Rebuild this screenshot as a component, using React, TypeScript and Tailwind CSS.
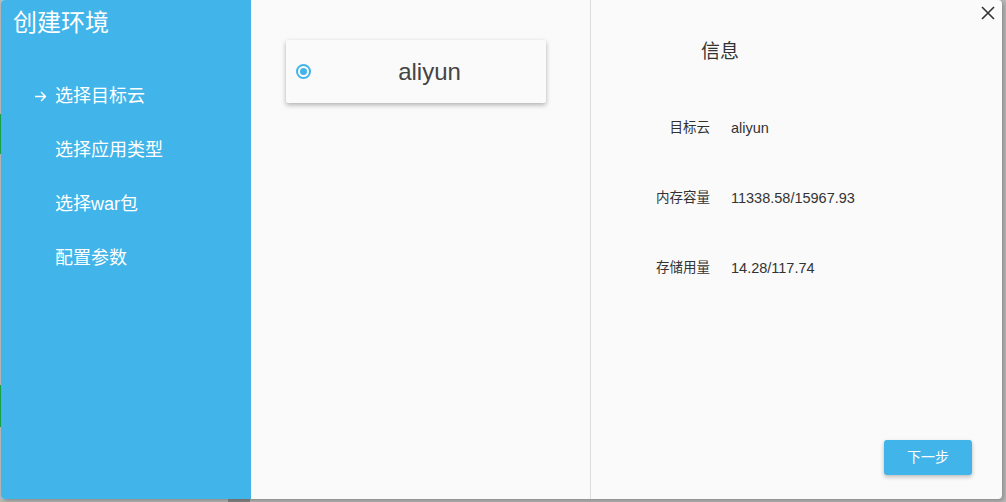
import React from "react";

const font = { fontFamily: '"Liberation Sans", "Noto Sans CJK SC", sans-serif' };

export default function App() {
  const menu = ["选择目标云", "选择应用类型", "选择war包", "配置参数"];
  const info: [string, string][] = [
    ["目标云", "aliyun"],
    ["内存容量", "11338.58/15967.93"],
    ["存储用量", "14.28/117.74"],
  ];
  return (
    <div className="relative w-[1006px] h-[502px] overflow-hidden bg-[#b9b9b9]" style={font}>
      {/* backdrop bits */}
      <div className="absolute left-0 top-[114px] w-[2px] h-[40px] bg-[#1aa64a]" />
      <div className="absolute left-0 top-[385px] w-[2px] h-[42px] bg-[#1aa64a]" />
      <div className="absolute left-[228px] top-[499px] w-[22px] h-[3px] bg-[#8a8a8a]" />

      {/* dialog */}
      <div className="absolute left-[1px] top-0 w-[1001px] h-[499px] flex rounded-[4px] overflow-hidden bg-[#fafafa] shadow-[2px_2px_4px_rgba(0,0,0,0.25)]">
        {/* sidebar */}
        <div className="w-[250px] h-full bg-[#41b4e9] text-white pt-[8px] pl-[12px]">
          <div className="text-[24px] leading-[30px]">创建环境</div>
          <div className="mt-[46px] flex flex-col">
            {menu.map((m, i) => (
              <div key={m} className="h-[54px] flex items-start text-[18px] leading-[24px]">
                <span className="w-[42px] h-[24px] flex items-center justify-end pr-[8px]">
                  {i === 0 && (
                    <svg width="13" height="13" viewBox="0 0 13 13" fill="none" stroke="white" strokeWidth="1.4">
                      <path d="M1 6.5h11M7 2l4.5 4.5L7 11" />
                    </svg>
                  )}
                </span>
                <span>{m}</span>
              </div>
            ))}
          </div>
        </div>

        {/* middle */}
        <div className="w-[339px] h-full pt-[40px] pl-[35px]">
          <div className="w-[260px] h-[63px] bg-[#fafafa] rounded-[2px] shadow-[0_2px_5px_rgba(0,0,0,0.3)] flex items-center pl-[10px]">
            <div className="w-[15px] h-[15px] rounded-full border-[2px] border-[#41b4e9] flex items-center justify-center">
              <div className="w-[7px] h-[7px] rounded-full bg-[#41b4e9]" />
            </div>
            <div className="flex-1 text-center text-[24px] text-[#444] pl-[2px]">aliyun</div>
          </div>
        </div>

        {/* right */}
        <div className="relative flex-1 h-full border-l border-[#dddddd] flex flex-col">
          <button className="absolute right-[7px] top-[6px] w-[14px] h-[14px]">
            <svg width="14" height="14" viewBox="0 0 14 14" stroke="#333" strokeWidth="1.6">
              <path d="M1 1l12 12M13 1L1 13" />
            </svg>
          </button>
          <div className="pl-[110px] pt-[40px] text-[19px] leading-[24px] text-[#333]">信息</div>
          <div className="mt-[54px] flex flex-col">
            {info.map(([k, v]) => (
              <div key={k} className="h-[70px] flex items-start text-[#333]">
                <div className="w-[119px] text-right text-[13.5px] leading-[20px]">{k}</div>
                <div className="pl-[21px] text-[14.5px] leading-[20px]">{v}</div>
              </div>
            ))}
          </div>
          <div className="mt-auto mb-[24px] flex justify-end pr-[30px]">
            <button className="w-[88px] h-[35px] rounded-[3px] bg-[#41b4e9] text-white text-[14px] shadow-[0_2px_4px_rgba(0,0,0,0.25)]">
              下一步
            </button>
          </div>
        </div>
      </div>
    </div>
  );
}
